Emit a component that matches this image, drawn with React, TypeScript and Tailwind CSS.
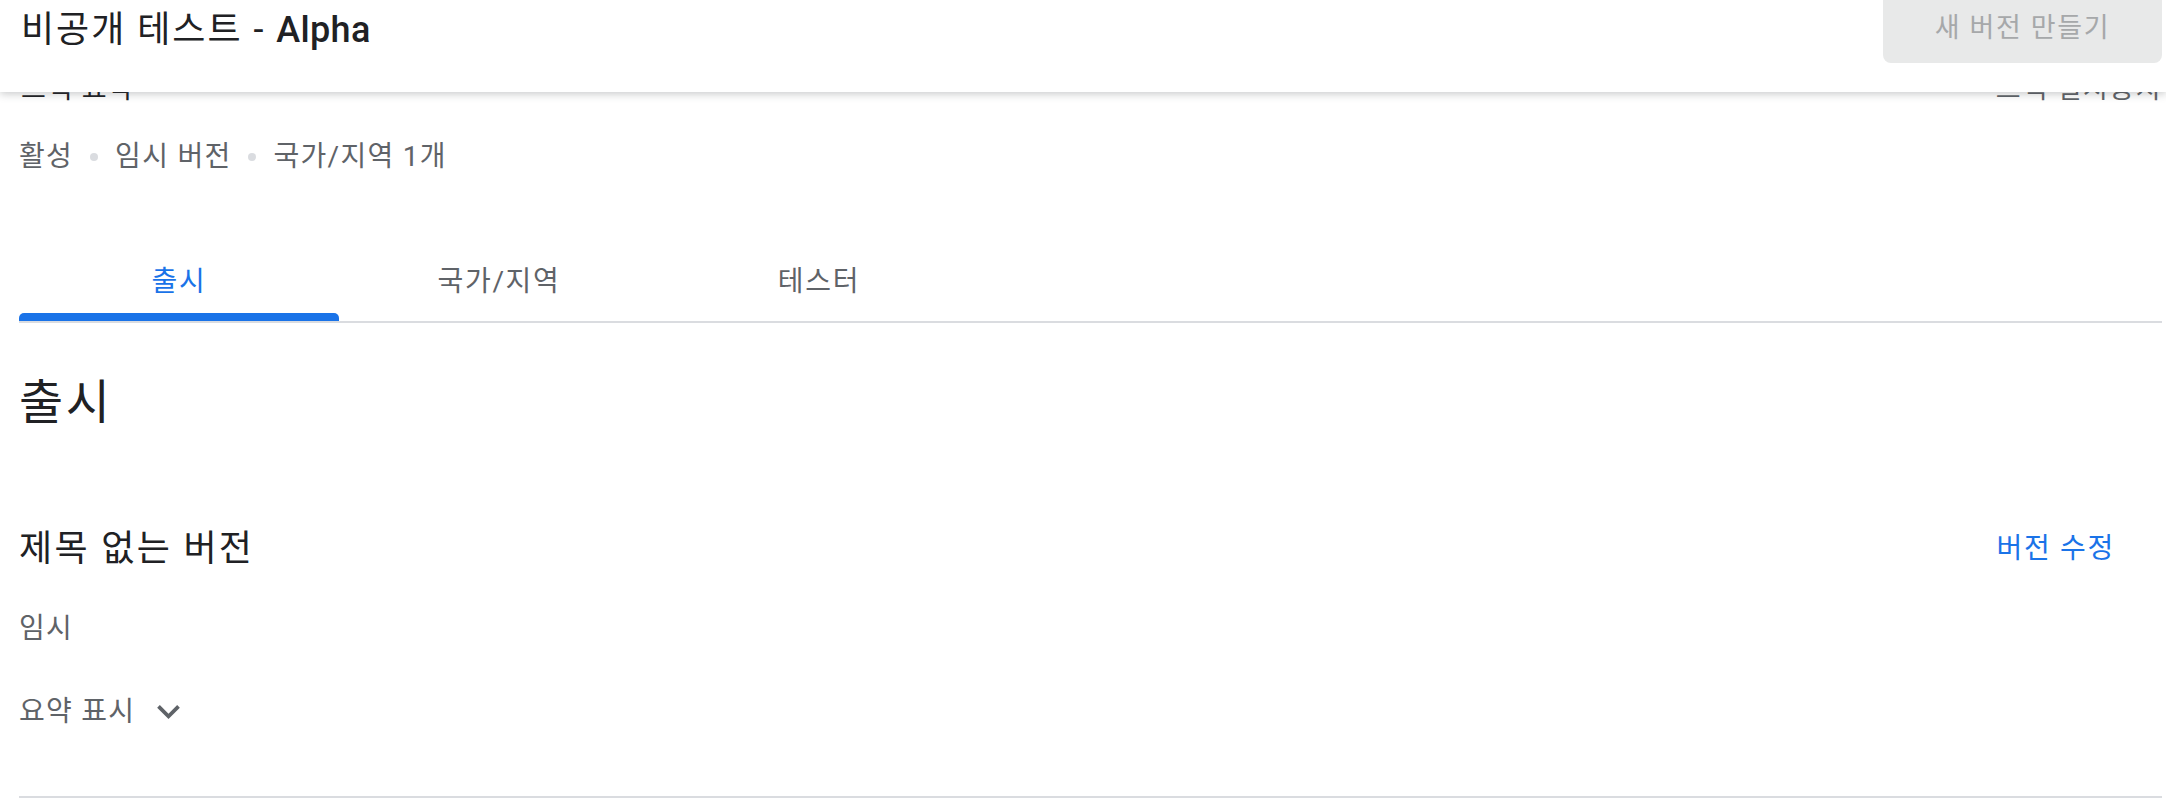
import { useState } from "react";

const tabs = ["출시", "국가/지역", "테스터"];

function Dot() {
  return <span className="mx-[17px] inline-block h-[8px] w-[8px] rounded-full bg-[#dadce0]" />;
}

function ExpandMore() {
  return (
    <svg width="23" height="14" viewBox="0 0 12 7.41" className="ml-[22px] shrink-0" fill="#5f6368">
      <path d="M10.59 0 6 4.58 1.41 0 0 1.41l6 6 6-6z" />
    </svg>
  );
}

export default function App() {
  const [active, setActive] = useState(0);

  return (
    <div className="relative min-h-screen bg-white font-['Roboto','Noto_Sans_CJK_KR',sans-serif] tracking-[0.08em] text-[#202124]">
      <div className="absolute left-0 right-0 top-0 z-10 flex h-[92px] items-start justify-between bg-white pl-[21px] pr-[4px] shadow-[0_2px_8px_rgba(60,64,67,0.28)]">
        <h1 className="mt-[8px] text-[36px] font-normal leading-[44px] tracking-[0.055em] text-[#202124]">
          비공개 테스트 - <span className="font-medium tracking-[0.01em]">Alpha</span>
        </h1>
        <button className="flex h-[63px] w-[279px] items-start justify-center rounded-b-[8px] bg-[#e8e9e9] pt-[10px] text-[27px] leading-[36px] tracking-[0.06em] text-[#a6a8aa]">
          새 버전 만들기
        </button>
      </div>

      <div className="pl-[19px] pr-[4px]">
        {/* Row hidden mostly under the header */}
        <div className="flex justify-between pt-[71px] text-[27px] leading-[36px] tracking-[0.055em]">
          <span className="pl-[2px] text-[#202124]">트랙 요약</span>
          <span className="text-[#5f6368]">트랙 일시중지</span>
        </div>

        <div className="mt-[32px] flex items-center text-[28px] leading-[36px] text-[#5f6368]">
          <span>활성</span>
          <Dot />
          <span>임시 버전</span>
          <Dot />
          <span>국가/지역 1개</span>
        </div>

        {/* Tabs */}
        <div className="mt-[89px] flex border-b-2 border-[#dadce0]">
          {tabs.map((t, i) => (
            <button key={t} onClick={() => setActive(i)} className="flex w-[320px] flex-col items-center">
              <span
                className={`mb-[13px] text-[28px] leading-[36px] tracking-[0.06em] ${
                  active === i ? "text-[#1a73e8]" : "text-[#5f6368]"
                }`}
              >
                {t}
              </span>
              <span className={`h-[8px] w-full rounded-t-[5px] ${active === i ? "bg-[#1a73e8]" : "bg-transparent"}`} />
            </button>
          ))}
        </div>

        <h2 className="mt-[50px] text-[48px] font-normal leading-[60px] tracking-[0.055em] text-[#202124]">출시</h2>

        <div className="mt-[94px] flex items-center justify-between">
          <span className="text-[36px] leading-[44px] tracking-[0.065em] text-[#202124]">제목 없는 버전</span>
          <button className="mr-[47px] text-[28px] leading-[36px] tracking-[0.06em] text-[#1a73e8]">버전 수정</button>
        </div>

        <div className="mt-[40px] text-[28px] leading-[36px] text-[#5f6368]">임시</div>

        <button className="mt-[47px] flex items-center text-[28px] leading-[36px] text-[#5f6368]">
          <span>요약 표시</span>
          <ExpandMore />
        </button>

        <div className="mt-[66px] h-[2px] bg-[#dadce0]" />
      </div>
    </div>
  );
}
